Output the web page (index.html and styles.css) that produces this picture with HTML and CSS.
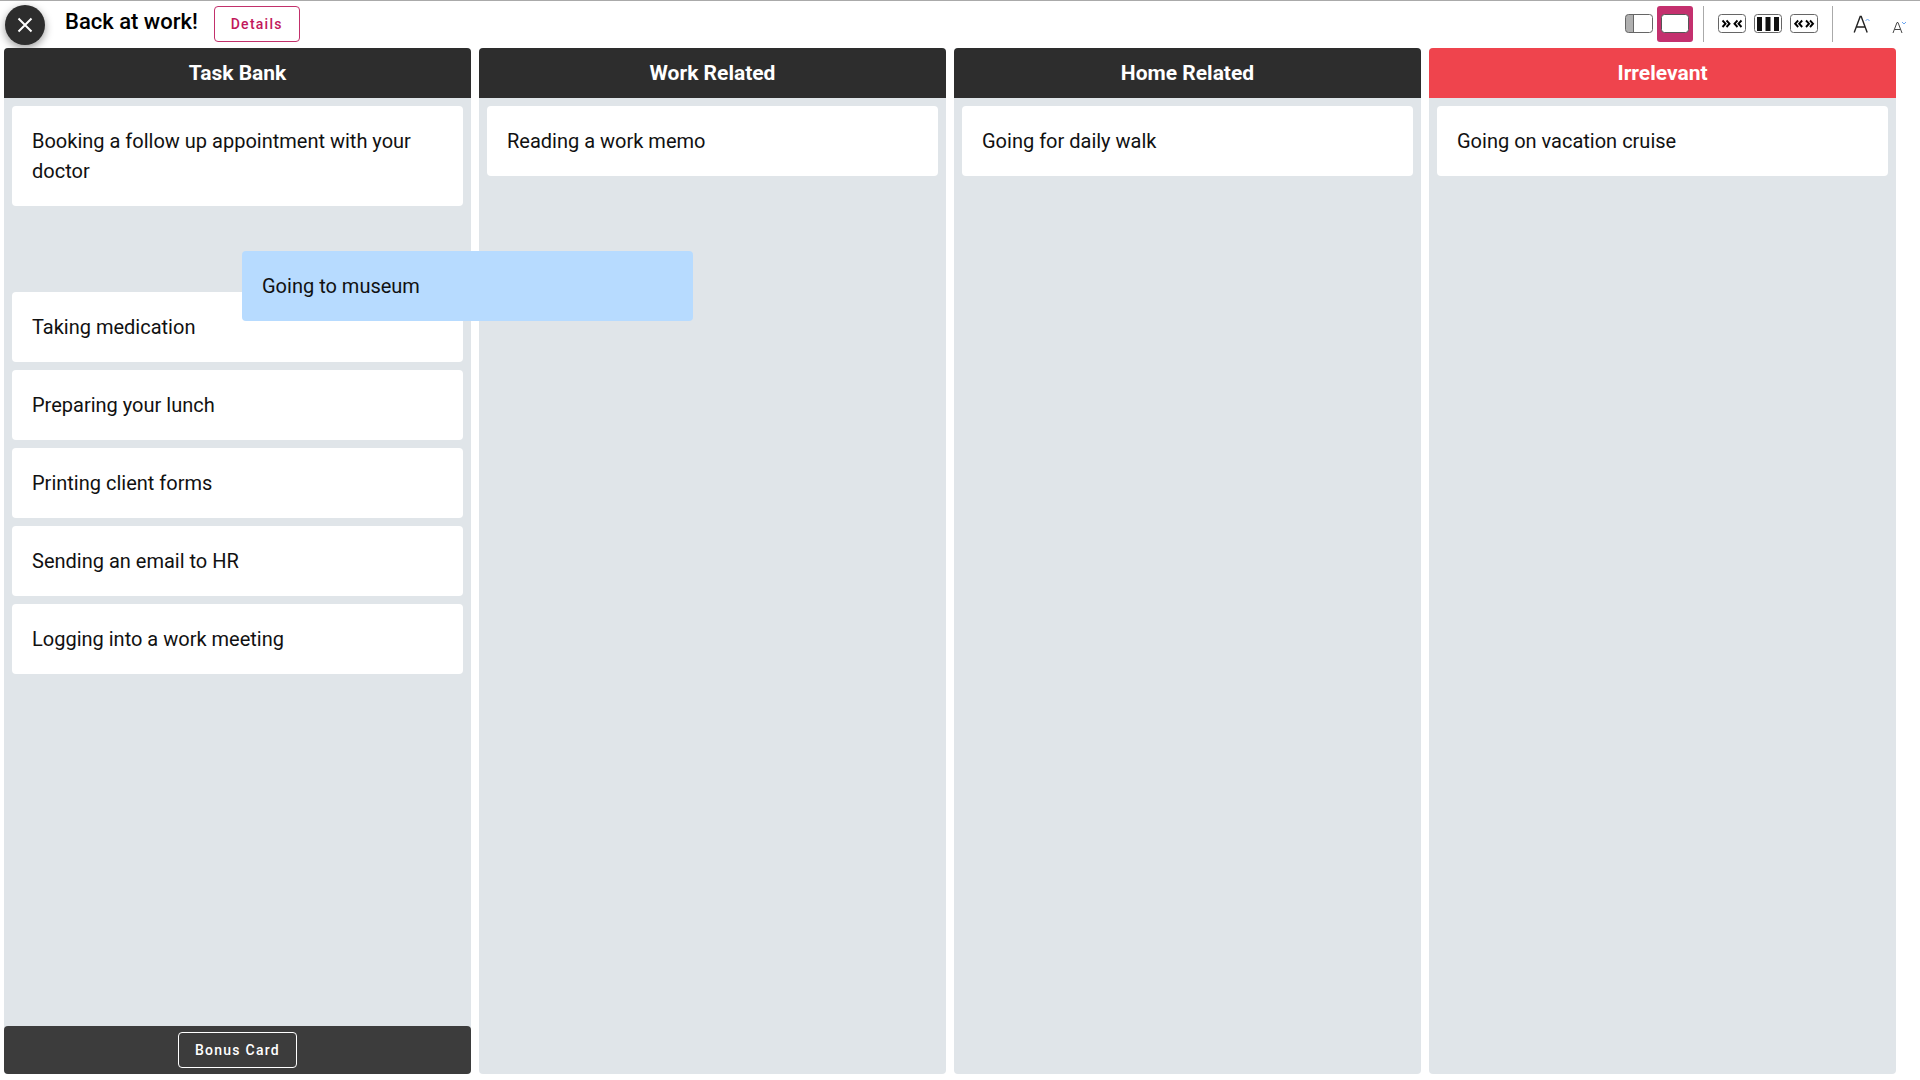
FILE: index.html
```
<!DOCTYPE html>
<html lang="en">
<head>
    <meta charset="UTF-8">
    <meta name="viewport" content="width=device-width, initial-scale=1.0">
    <title>Back at work!</title>
    <link rel="stylesheet" href="styles.css">
</head>
<body>

    <header class="toolbar">
        <button class="close-button" type="button" aria-label="Close">
            <svg width="24" height="24" viewBox="0 0 24 24"><path d="M5.5 5.5 18.5 18.5M18.5 5.5 5.5 18.5" fill="none" stroke="#fff" stroke-width="2"/></svg>
        </button>
        <h1 class="title">Back at work!</h1>
        <button class="details-button" type="button">Details</button>

        <div class="tools">
            <div class="tool-group">
                <button class="tool" type="button" aria-label="Show side panel">
                    <svg width="28" height="20" viewBox="0 0 28 20">
                        <rect x="0.5" y="0.5" width="27" height="18" rx="3" fill="#fff"/>
                        <path d="M8.5 0.5H3.5a3 3 0 0 0-3 3v12a3 3 0 0 0 3 3h5z" fill="#b0b0b0"/>
                        <rect x="0.5" y="0.5" width="27" height="18" rx="3" fill="none" stroke="#666"/>
                        <path d="M8.5 1v17" stroke="#666"/>
                    </svg>
                </button>
                <button class="tool selected" type="button" aria-label="Full width">
                    <svg width="28" height="20" viewBox="0 0 28 20"><rect x="0.5" y="0.5" width="27" height="18" rx="3" fill="#fff" stroke="#555"/></svg>
                </button>
            </div>
            <div class="tool-group">
                <button class="tool" type="button" aria-label="Narrow columns">
                    <svg width="28" height="20" viewBox="0 0 28 20">
                        <rect x="0.5" y="0.5" width="27" height="18" rx="3" fill="#fff" stroke="#666"/>
                        <path d="M4.5 6.5 7.500 9.700 4.500 13M8.500 6.500l3 3.200-3 3.300M19.500 6.500l-3 3.200 3 3.300M23.500 6.500l-3 3.200 3 3.300" fill="none" stroke="#000" stroke-width="1.900"/>
                    </svg>
                </button>
                <button class="tool" type="button" aria-label="Fit columns">
                    <svg width="28" height="20" viewBox="0 0 28 20">
                        <rect x="0.5" y="0.5" width="27" height="18" rx="3" fill="#fff" stroke="#666"/>
                        <path d="M3 3h5v14H3zM11.500 3h5v14h-5zM20 3h5v14h-5z" fill="#111"/>
                    </svg>
                </button>
                <button class="tool" type="button" aria-label="Widen columns">
                    <svg width="28" height="20" viewBox="0 0 28 20">
                        <rect x="0.5" y="0.5" width="27" height="18" rx="3" fill="#fff" stroke="#666"/>
                        <path d="M8.200 6.500l-3 3.200 3 3.300M12.200 6.500l-3 3.200 3 3.300M16 6.500l3 3.200-3 3.300M20 6.500l3 3.200-3 3.300" fill="none" stroke="#000" stroke-width="1.900"/>
                    </svg>
                </button>
            </div>
            <div class="tool-group">
                <button class="tool" type="button" aria-label="Larger text">
                    <svg width="28" height="28" viewBox="0 0 28 28">
                        <path d="M7.200 22.500 13.200 6.500h1L20.200 22.500M9.500 17h8.500" fill="none" stroke="#222" stroke-width="1.400"/>
                        <path d="M18.500 11l2-2 2 2" fill="none" stroke="#6aa5f0"/>
                    </svg>
                </button>
                <button class="tool" type="button" aria-label="Smaller text">
                    <svg width="28" height="28" viewBox="0 0 28 28">
                        <path d="M10 23 14 12.500h1L19 23M11.500 19.500h6" fill="none" stroke="#444"/>
                        <path d="M19 12l2 2 2-2" fill="none" stroke="#6aa5f0"/>
                    </svg>
                </button>
            </div>
        </div>
    </header>

    <main class="board">
        <section class="column">
            <h2 class="column-title">Task Bank</h2>
            <ul class="cards">
                <li class="card">Booking a follow up appointment with your doctor</li>
                <li class="slot">
                    <div class="card dragging">Going to museum</div>
                </li>
                <li class="card">Taking medication</li>
                <li class="card">Preparing your lunch</li>
                <li class="card">Printing client forms</li>
                <li class="card">Sending an email to HR</li>
                <li class="card">Logging into a work meeting</li>
            </ul>
            <div class="column-footer">
                <button class="bonus-button" type="button">Bonus Card</button>
            </div>
        </section>

        <section class="column">
            <h2 class="column-title">Work Related</h2>
            <ul class="cards">
                <li class="card">Reading a work memo</li>
            </ul>
        </section>

        <section class="column">
            <h2 class="column-title">Home Related</h2>
            <ul class="cards">
                <li class="card">Going for daily walk</li>
            </ul>
        </section>

        <section class="column">
            <h2 class="column-title irrelevant">Irrelevant</h2>
            <ul class="cards">
                <li class="card">Going on vacation cruise</li>
            </ul>
        </section>
    </main>

</body>
</html>
```
FILE: styles.css
```
* {
    box-sizing: border-box;
}

body {
    display: flex;
    flex-direction: column;
    min-height: 100vh;
    margin: 0;
    border-top: 1px solid #aaa;
    font-family: Roboto, sans-serif;
    font-size: 20px;
    line-height: 30px;
    color: #111;
    background-color: #fff;
}

button {
    padding: 0;
    border: 0;
    font-family: inherit;
    cursor: pointer;
}

.toolbar {
    display: flex;
    align-items: center;
    height: 47px;
    padding: 0 5px 1px 5px;
}

.close-button {
    display: flex;
    align-items: center;
    justify-content: center;
    width: 40px;
    height: 40px;
    margin-top: 2px;
    border-radius: 50%;
    background-color: #2d2d2d;
    box-shadow: 0 3px 8px rgba(0, 0, 0, 0.4);
}

.title {
    margin: 0 16px 4px 20px;
    font-size: 22px;
    font-weight: 500;
    color: #000;
}

.details-button,
.bonus-button {
    height: 36px;
    padding: 0 16px;
    border: 1px solid #c2306b;
    border-radius: 4px;
    font-size: 14px;
    font-weight: 500;
    letter-spacing: 0.09em;
    color: #c2185b;
    background-color: transparent;
}

.tools {
    display: flex;
    align-items: center;
    margin-left: auto;
}

.tool-group {
    display: flex;
}

.tool-group + .tool-group {
    margin-left: 10px;
    padding-left: 10px;
    border-left: 1px solid #aaa;
}

.tool {
    display: flex;
    align-items: center;
    justify-content: center;
    width: 36px;
    height: 36px;
    border-radius: 3px;
    background-color: transparent;
}

.selected {
    background-color: #c4306e;
}

.board {
    display: flex;
    flex: 1;
    gap: 8px;
    padding: 0 24px 6px 4px;
}

.column {
    display: flex;
    flex: 1;
    flex-direction: column;
    border-radius: 4px;
    background-color: #e0e5e9;
}

.column-title {
    margin: 0;
    padding: 10px;
    border-radius: 4px 4px 0 0;
    font-size: 21px;
    font-weight: 700;
    text-align: center;
    color: #fff;
    background-color: #2d2d2d;
}

.irrelevant {
    background-color: #ef444d;
}

.cards {
    display: flex;
    flex: 1;
    flex-direction: column;
    gap: 8px;
    margin: 0;
    padding: 8px;
    list-style: none;
}

.card {
    padding: 20px;
    border-radius: 4px;
    background-color: #fff;
}

.slot {
    position: relative;
    height: 70px;
}

.dragging {
    position: absolute;
    top: 37px;
    left: 230px;
    width: 100%;
    background-color: #b7dbff;
}

.column-footer {
    display: flex;
    justify-content: center;
    padding: 6px;
    border-radius: 4px;
    background-color: #3c3c3c;
}

.bonus-button {
    border-color: #fff;
    color: #fff;
}
```
